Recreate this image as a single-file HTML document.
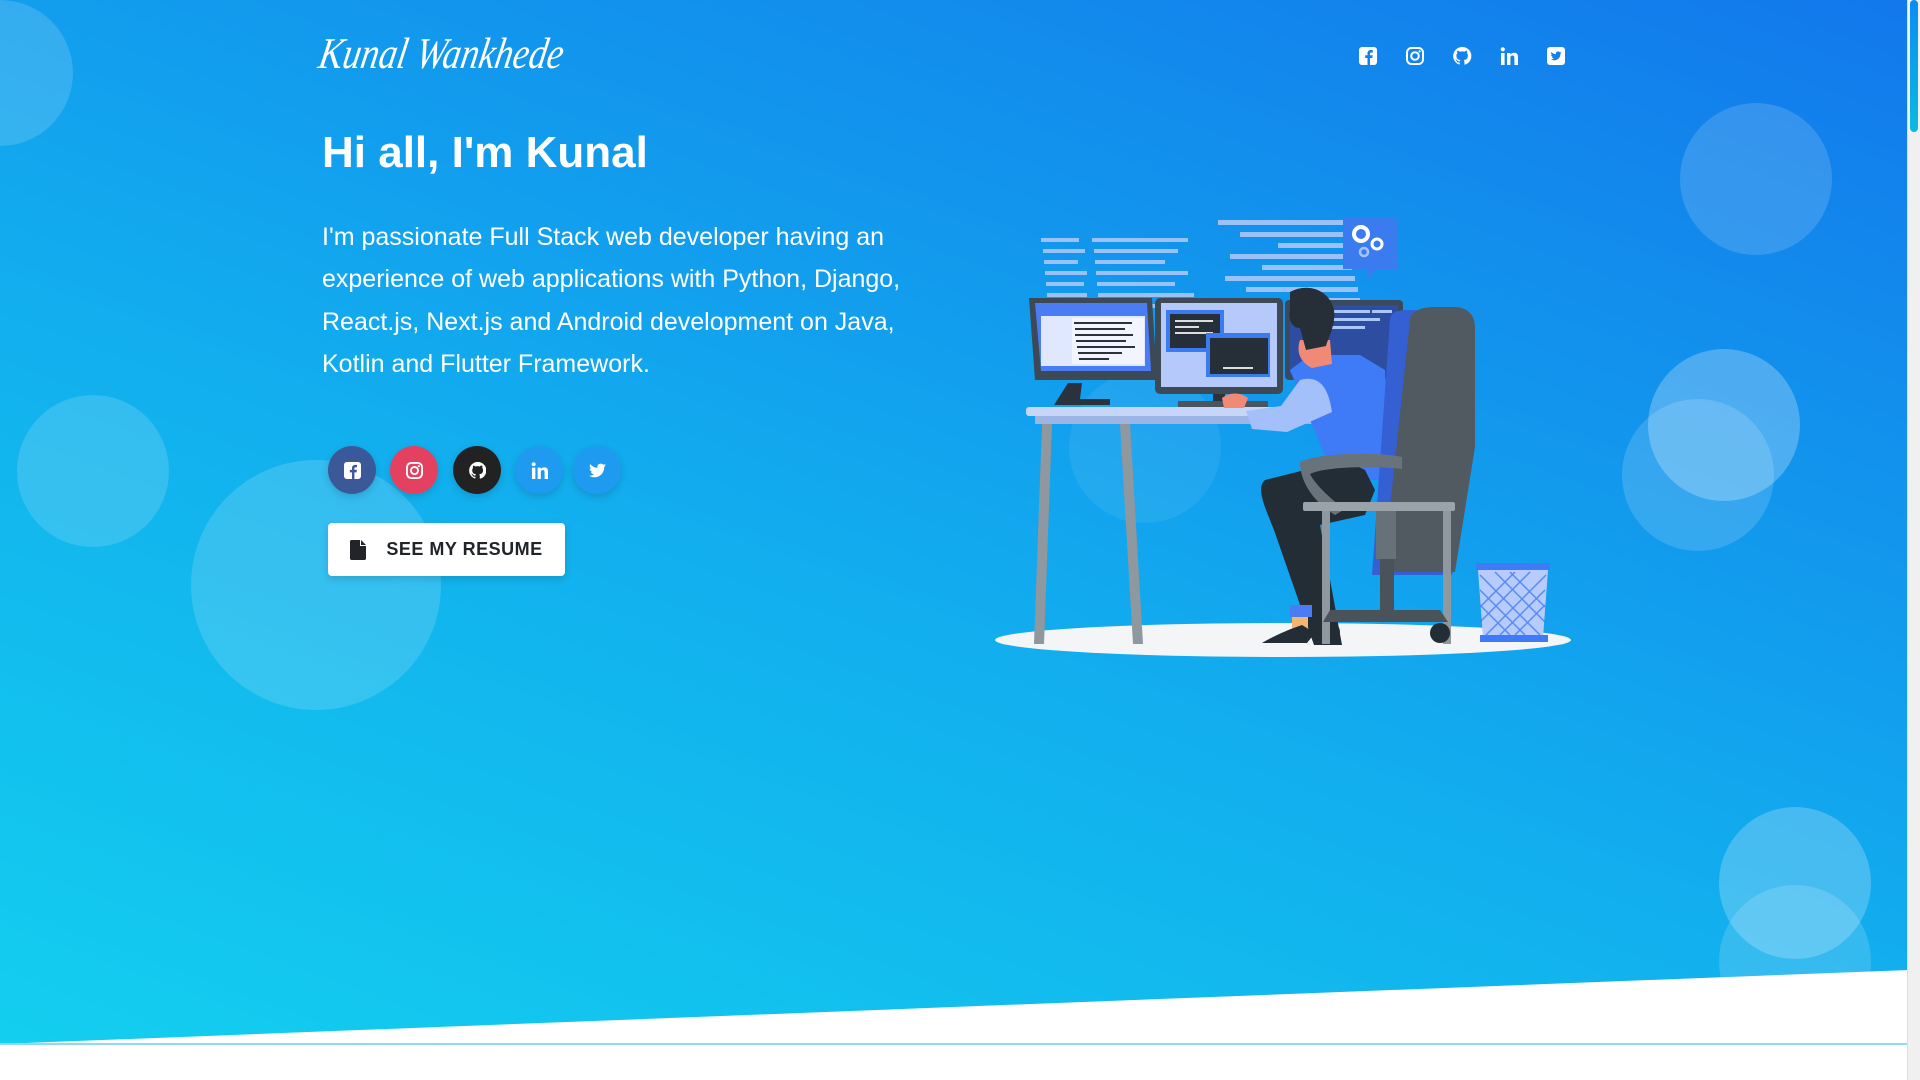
<!DOCTYPE html>
<html><head><meta charset="utf-8">
<style>
html,body{margin:0;padding:0;width:1920px;height:1080px;overflow:hidden;background:#fff;font-family:"Liberation Sans",Arial,sans-serif}
.hero{position:absolute;left:0;top:0;width:1908px;height:1080px;background:linear-gradient(20deg,#13d0ef 0%,#12aeee 45%,#1278ec 100%);clip-path:polygon(0 0,100% 0,100% 970px,0 1044px)}
.c{position:absolute;border-radius:50%;background:rgba(255,255,255,.15)}
.line{position:absolute;left:0;top:1043px;width:1908px;height:2px;background:#8fd9f3}
.sb{position:absolute;right:0;top:0;width:12px;height:1080px;background:#f0f0f0;border-left:1px solid #ddd}
.sb i{position:absolute;left:2px;top:0;width:8px;height:132px;border-radius:4px;background:linear-gradient(#0a8df5,#0bb9e0)}
.logo{position:absolute;left:324px;top:28px;color:#fff;font-family:"Liberation Serif",serif;font-style:italic;font-size:44px;font-weight:normal;letter-spacing:0;transform-origin:0 0;transform:skewX(-10deg) scaleX(.82)}
h1{position:absolute;left:322px;top:125px;margin:0;color:#fff;font-size:44px;font-weight:bold;line-height:56px}
p.d{position:absolute;left:322px;top:216px;margin:0;width:620px;color:#fff;font-size:25px;line-height:42.3px}
.s{position:absolute;top:446px;width:48px;height:48px;border-radius:50%;box-shadow:0 3px 8px rgba(0,0,0,.15);display:flex;align-items:center;justify-content:center}
.s svg{width:17px;height:17px}
.btn{position:absolute;left:328px;top:523px;width:237px;height:53px;background:#fff;border-radius:4px;box-shadow:0 3px 8px rgba(0,0,0,.15);display:flex;align-items:center;justify-content:center;font-weight:bold;font-size:18px;color:#212529;letter-spacing:.5px}
.btn svg{margin-right:20px}
</style></head><body>
<div class="hero">
 <div class="c" style="left:-73px;top:0;width:146px;height:146px"></div>
 <div class="c" style="left:1680px;top:103px;width:152px;height:152px"></div>
 <div class="c" style="left:17px;top:395px;width:152px;height:152px"></div>
 <div class="c" style="left:191px;top:460px;width:250px;height:250px"></div>
 <div class="c" style="left:1069px;top:371px;width:152px;height:152px;background:rgba(255,255,255,.07)"></div>
 <div class="c" style="left:1648px;top:349px;width:152px;height:152px;background:rgba(255,255,255,.25)"></div>
 <div class="c" style="left:1622px;top:399px;width:152px;height:152px"></div>
 <div class="c" style="left:1719px;top:807px;width:152px;height:152px;background:rgba(255,255,255,.22)"></div>
 <div class="c" style="left:1719px;top:885px;width:152px;height:152px"></div>

 <svg style="position:absolute;left:0;top:0" width="1908" height="1080" viewBox="0 0 1908 1080">
  <ellipse cx="1283" cy="640" rx="288" ry="17" fill="#f4f5f7"/>
  <g fill="#a9c7fa" opacity=".9">
   <rect x="1041" y="238" width="38" height="4"/><rect x="1043" y="249" width="42" height="4"/><rect x="1044" y="260" width="34" height="4"/><rect x="1045" y="271" width="42" height="4"/><rect x="1046" y="282" width="38" height="4"/><rect x="1047" y="293" width="40" height="4"/>
   <rect x="1092" y="238" width="96" height="4"/><rect x="1094" y="249" width="84" height="4"/><rect x="1095" y="260" width="70" height="4"/><rect x="1096" y="271" width="92" height="4"/><rect x="1097" y="282" width="78" height="4"/><rect x="1098" y="293" width="96" height="4"/><rect x="1099" y="304" width="86" height="4"/>
   <rect x="1218" y="220" width="125" height="5"/><rect x="1240" y="232" width="105" height="5"/><rect x="1278" y="243" width="70" height="5"/><rect x="1230" y="254" width="120" height="5"/><rect x="1262" y="265" width="90" height="5"/><rect x="1225" y="276" width="130" height="5"/><rect x="1246" y="287" width="112" height="5"/><rect x="1290" y="298" width="70" height="5"/>
  </g>
  <path d="M1343 217h55v52h-22l-10 12 2-12h-25z" fill="#3b7bf0"/>
  <circle cx="1361" cy="234" r="7" fill="none" stroke="#fff" stroke-width="4"/><circle cx="1377" cy="244" r="5" fill="none" stroke="#fff" stroke-width="3"/><circle cx="1364" cy="252" r="4" fill="none" stroke="#aac4fb" stroke-width="2.5"/>
  <rect x="1285" y="300" width="118" height="80" rx="4" fill="#3a4a5c"/><rect x="1290" y="305" width="108" height="70" fill="#2d4ea0"/>
  <g fill="#a9c7fa"><rect x="1330" y="310" width="40" height="3"/><rect x="1330" y="318" width="50" height="3"/><rect x="1330" y="326" width="35" height="3"/><rect x="1372" y="310" width="20" height="3"/></g>
  <path d="M1029 298h123l5 82h-122z" fill="#3d4954"/>
  <path d="M1035 303h112l4 68h-110z" fill="#4a7cf4"/>
  <rect x="1041" y="316" width="104" height="50" fill="#dfe8ff"/>
  <rect x="1072" y="318" width="72" height="46" fill="#f2f5ff"/>
  <g fill="#2a333d"><rect x="1074" y="322" width="58" height="2"/><rect x="1075" y="328" width="50" height="2"/><rect x="1075" y="334" width="58" height="2"/><rect x="1076" y="340" width="50" height="2"/><rect x="1077" y="346" width="58" height="2"/><rect x="1078" y="352" width="44" height="2"/><rect x="1079" y="358" width="30" height="2"/></g>
  <path d="M1068 383h14l-2 16h30v6h-56z" fill="#2a333d"/>
  <rect x="1155" y="298" width="128" height="96" rx="5" fill="#3d4954"/>
  <rect x="1161" y="303" width="116" height="84" fill="#b5c9fb"/>
  <rect x="1166" y="310" width="58" height="42" fill="#3b7bf0"/><rect x="1170" y="314" width="50" height="34" fill="#262f38"/>
  <g fill="#ddd"><rect x="1175" y="320" width="38" height="2"/><rect x="1175" y="326" width="24" height="2"/><rect x="1175" y="332" width="38" height="2"/></g>
  <rect x="1206" y="333" width="64" height="44" fill="#3b7bf0"/><rect x="1210" y="338" width="58" height="36" fill="#262f38"/><rect x="1223" y="367" width="30" height="2" fill="#ddd"/>
  <rect x="1213" y="394" width="12" height="10" fill="#2a333d"/><rect x="1178" y="401" width="90" height="6" fill="#4a5560"/>
  <rect x="1026" y="407" width="310" height="9" rx="3" fill="#c7d6f8"/>
  <rect x="1035" y="416" width="290" height="8" fill="#9db5e4"/>
  <path d="M1042 424h10l-8 220h-10z" fill="#8f979f"/>
  <path d="M1120 424h10l13 220h-10z" fill="#8f979f"/>
  <!-- person -->
  <path d="M1290 370l20-15 50 0 25 15 5 110-55 0-25-60z" fill="#3f7bf7"/>
  <path d="M1300 380c18-5 28 5 32 32l-45 20-35-3-6-18 35-5z" fill="#a4c0fb"/>
  <path d="M1222 398c8-6 18-6 26 0l-4 10h-20z" fill="#f08a76"/>
  <path d="M1265 480l80-20 20 10 10 20-10 25-45 10 22 120-28 0-40-115c-10-25-18-42-9-50z" fill="#232d35"/>
  <path d="M1290 605h22v12h-22z" fill="#4a7cf4"/>
  <path d="M1292 617h16v14h-16z" fill="#f2b572"/>
  <path d="M1302 625c-15 5-30 12-40 18h45l8-10z" fill="#232d35"/>
  <circle cx="1331" cy="632" r="9" fill="#232d35"/>
  <path d="M1300 340c-4 12 0 22 12 28l20-4-2-24z" fill="#f08a76"/>
  <path d="M1290 292c18-10 40 -2 44 18 2 15-6 28-8 36l-20 4-6-22c-8 0-12-8-10-18z" fill="#262f38"/>
  <!-- chair -->
  <path d="M1390 320c0-8 8-10 18-10h38c15 0 28 8 28 25v110l-22 130h-80z" fill="#3560d4"/>
  <path d="M1410 320c0-8 10-13 25-13h20c12 0 20 8 20 20v120l-20 125h-72z" fill="#515a61"/>
  <path d="M1300 462c20-10 80-10 102-5v12c-25-3-75-3-92 5 5 10 20 25 35 35l-10 6c-20-12-35-32-35-53z" fill="#69737b"/>
  <rect x="1303" y="502" width="152" height="9" rx="2" fill="#9aa2aa"/>
  <rect x="1322" y="511" width="8" height="133" fill="#8f979f"/><rect x="1443" y="511" width="8" height="133" fill="#8f979f"/>
  <rect x="1376" y="511" width="20" height="48" fill="#67717a"/><rect x="1380" y="559" width="14" height="52" fill="#4a535a"/>
  <path d="M1330 610h110l8 12h-125z" fill="#4a535a"/>
  <circle cx="1440" cy="633" r="10" fill="#232d35"/>
  <rect x="1476" y="563" width="74" height="7" fill="#3f7bf7"/>
  <path d="M1478 570h70l-5 68h-60z" fill="#b7cbfc"/>
  <g stroke="#3f7bf7" stroke-width="1.5" opacity=".8"><path d="M1480 575l60 60M1495 572l50 50M1510 572l35 35M1480 590l45 45M1480 605l30 30M1546 575l-60 60M1530 572l-50 50M1515 572l-35 35M1545 590l-45 45M1545 605l-30 30"/></g>
  <rect x="1480" y="635" width="68" height="7" fill="#3f7bf7"/>
 </svg>
</div>
<div class="line"></div>

<div class="logo">Kunal Wankhede</div>

<svg style="position:absolute;left:1359px;top:46px" width="220" height="20" viewBox="0 0 220 20" fill="#fff">
 <g transform="translate(0,1)"><rect x="0" y="0" width="18" height="18" rx="3"/><path d="M11 18v-7h2.3l.4-2.7H11V6.8c0-.8.3-1.3 1.4-1.3h1.4V3.1c-.3 0-1.1-.1-2-.1-2 0-3.3 1.2-3.3 3.4v1.9H6.2V11h2.3v7z" fill="#1181ec"/></g>
 <g transform="translate(47,1)"><rect x="1" y="1" width="16" height="16" rx="4.5" fill="none" stroke="#fff" stroke-width="2"/><circle cx="9" cy="9" r="3.8" fill="none" stroke="#fff" stroke-width="2"/><circle cx="13.6" cy="4.4" r="1.1"/></g>
 <g transform="translate(94,1)"><path d="M9 0a9 9 0 0 0-2.8 17.5c.4.1.6-.2.6-.4v-1.6c-2.5.5-3-1.1-3-1.1-.4-1-1-1.3-1-1.3-.8-.6.1-.6.1-.6.9.1 1.4.9 1.4.9.8 1.4 2.1 1 2.6.8.1-.6.3-1 .6-1.2-2-.2-4.1-1-4.1-4.4 0-1 .3-1.8.9-2.4-.1-.2-.4-1.1.1-2.4 0 0 .8-.2 2.5.9a8.6 8.6 0 0 1 4.5 0c1.7-1.2 2.5-.9 2.5-.9.5 1.3.2 2.2.1 2.4.6.6.9 1.4.9 2.4 0 3.5-2.1 4.2-4.1 4.4.3.3.6.8.6 1.7v2.5c0 .2.2.5.6.4A9 9 0 0 0 9 0z"/></g>
 <g transform="translate(141,1)"><rect x="1" y="6" width="3.6" height="12"/><circle cx="2.8" cy="2.3" r="2.1"/><path d="M7 6h3.4v1.7C11 6.6 12.3 5.7 14.2 5.7c3.3 0 3.8 2.2 3.8 5V18h-3.6v-6.4c0-1.5 0-3.1-1.9-3.1s-2.1 1.4-2.1 3V18H7z"/></g>
 <g transform="translate(188,1)"><rect x="0" y="0" width="18" height="18" rx="3"/><path d="M14.5 5.6c-.4.2-.8.3-1.3.4.5-.3.8-.7 1-1.3-.4.3-.9.4-1.4.5a2.2 2.2 0 0 0-3.8 2A6.3 6.3 0 0 1 4.4 5c-.6 1-.3 2.3.7 3-.4 0-.7-.1-1-.3 0 1.1.8 2 1.8 2.2-.3.1-.7.1-1 0 .3.9 1.1 1.5 2.1 1.5A4.5 4.5 0 0 1 3.7 12.3a6.3 6.3 0 0 0 9.7-5.6c.4-.3.8-.7 1.100-1.1z" fill="#1181ec"/></g>
</svg>

<h1>Hi all, I'm Kunal</h1>
<p class="d">I'm passionate Full Stack web developer having an experience of web applications with Python, Django, React.js, Next.js and Android development on Java, Kotlin and Flutter Framework.</p>

<div class="s" style="left:328px;background:#3b5998"><svg viewBox="0 0 18 18" fill="#fff"><rect width="18" height="18" rx="3"/><path d="M11 18v-7h2.3l.4-2.7H11V6.8c0-.8.3-1.3 1.4-1.3h1.4V3.1c-.3 0-1.1-.1-2-.1-2 0-3.3 1.2-3.3 3.4v1.9H6.2V11h2.3v7z" fill="#3b5998"/></svg></div>
<div class="s" style="left:390px;background:#e4405f"><svg viewBox="0 0 18 18" fill="#fff"><rect x="1" y="1" width="16" height="16" rx="4.5" fill="none" stroke="#fff" stroke-width="2"/><circle cx="9" cy="9" r="3.8" fill="none" stroke="#fff" stroke-width="2"/><circle cx="13.6" cy="4.4" r="1.1"/></svg></div>
<div class="s" style="left:453px;background:#222"><svg viewBox="0 0 18 18" fill="#fff"><path d="M9 0a9 9 0 0 0-2.8 17.5c.4.1.6-.2.6-.4v-1.6c-2.5.5-3-1.1-3-1.1-.4-1-1-1.3-1-1.3-.8-.6.1-.6.1-.6.9.1 1.4.9 1.4.9.8 1.4 2.1 1 2.6.8.1-.6.3-1 .6-1.2-2-.2-4.1-1-4.1-4.4 0-1 .3-1.8.9-2.4-.1-.2-.4-1.1.1-2.4 0 0 .8-.2 2.5.9a8.6 8.6 0 0 1 4.5 0c1.7-1.2 2.5-.9 2.5-.9.5 1.3.2 2.2.1 2.4.6.6.9 1.4.9 2.4 0 3.5-2.1 4.2-4.1 4.4.3.3.6.8.6 1.7v2.5c0 .2.2.5.6.4A9 9 0 0 0 9 0z"/></svg></div>
<div class="s" style="left:515px;background:#1e9bf0"><svg viewBox="0 0 18 18" fill="#fff"><rect x="1" y="6" width="3.6" height="12"/><circle cx="2.8" cy="2.3" r="2.1"/><path d="M7 6h3.4v1.7C11 6.6 12.3 5.7 14.2 5.7c3.3 0 3.8 2.2 3.8 5V18h-3.6v-6.4c0-1.5 0-3.1-1.9-3.1s-2.1 1.4-2.1 3V18H7z"/></svg></div>
<div class="s" style="left:573px;background:#1e9bf0"><svg viewBox="0 0 18 18" fill="#fff"><path d="M18 3.4c-.7.3-1.4.5-2.1.6.8-.5 1.3-1.2 1.6-2-.7.4-1.5.7-2.3.9A3.7 3.7 0 0 0 8.9 6.2 10.4 10.4 0 0 1 1.3 2.3a3.7 3.7 0 0 0 1.1 4.9c-.6 0-1.2-.2-1.700-.5 0 1.8 1.3 3.3 3 3.6-.5.2-1.1.2-1.7.1.5 1.5 1.8 2.5 3.4 2.6A7.4 7.4 0 0 1 0 14.5 10.4 10.4 0 0 0 16.1 5.2c.7-.5 1.4-1.1 1.9-1.8z"/></svg></div>

<div class="btn"><svg width="16" height="20" viewBox="0 0 16 20"><path d="M0 1.5C0 .7.7 0 1.5 0H10v5.5c0 .3.2.5.5.5H16v12.5c0 .8-.7 1.5-1.5 1.5h-13C.7 20 0 19.3 0 18.5z" fill="#212529"/><path d="M11 0l5 5h-5z" fill="#212529"/></svg>SEE MY RESUME</div>

<div class="sb"><i></i></div>
</body></html>
